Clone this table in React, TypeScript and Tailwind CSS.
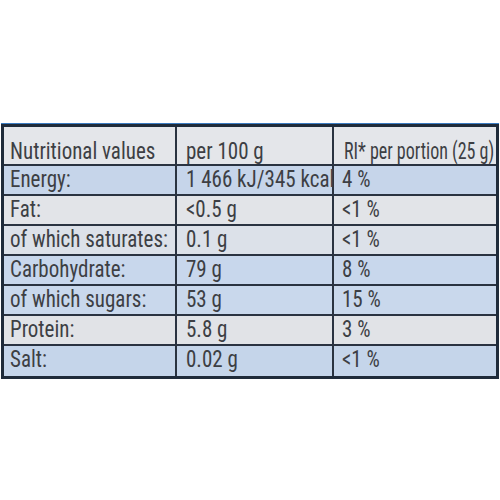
const rows = [
  { name: "Energy:", per100: "1 466 kJ/345 kcal", ri: "4 %", bg: "bg-[#c6d5ea]" },
  { name: "Fat:", per100: "<0.5 g", ri: "<1 %", bg: "bg-[#e2e4e8]" },
  { name: "of which saturates:", per100: "0.1 g", ri: "<1 %", bg: "bg-[#dce1e9]" },
  { name: "Carbohydrate:", per100: "79 g", ri: "8 %", bg: "bg-[#c8d7ec]" },
  { name: "of which sugars:", per100: "53 g", ri: "15 %", bg: "bg-[#c9d8ec]" },
  { name: "Protein:", per100: "5.8 g", ri: "3 %", bg: "bg-[#e1e3e7]" },
  { name: "Salt:", per100: "0.02 g", ri: "<1 %", bg: "bg-[#c5d5ea]" },
];

const line = "border-[#2a3341]";

// printed label face is taller than Roboto Condensed: stretch glyphs a little
function T({ children }: { children: string }) {
  return <span className="inline-block origin-[50%_77%] scale-y-[1.17]">{children}</span>;
}

export default function App() {
  return (
    <div
      className="w-[500px] h-[500px] bg-white pt-[124px] text-[#3d3f44] text-[21px] leading-[28px] whitespace-nowrap"
      style={{ fontFamily: '"Roboto Condensed", "Liberation Sans", sans-serif' }}
    >
      <div className="mx-[1px] border-[3px] border-[#1f2b3a] shadow-[0_-1px_0_#3b7cc2]">
        <div className={`grid grid-cols-[173px_157px_1fr] h-[39px] bg-[#e4e6ea] border-b-2 ${line} leading-[26px]`}>
          <div className={`border-r-2 ${line} pl-[6px] pt-[12px]`}><T>Nutritional values</T></div>
          <div className={`border-r-2 ${line} pl-[9px] pt-[12px]`}><T>per 100 g</T></div>
          <div className="pl-[10px] pt-[13px] text-[18px]">
            <span className="inline-block origin-[50%_74%] scale-y-[1.33]">RI* per portion (25 g)</span>
          </div>
        </div>
        {rows.map((r, i) => (
          <div
            key={r.name}
            className={`grid grid-cols-[173px_157px_1fr] h-[30px] ${r.bg} ${i < rows.length - 1 ? `border-b-2 ${line}` : ""}`}
          >
            <div className={`border-r-2 ${line} pl-[6px]`}><T>{r.name}</T></div>
            <div className={`border-r-2 ${line} pl-[9px]`}><T>{r.per100}</T></div>
            <div className="pl-[8px]"><T>{r.ri}</T></div>
          </div>
        ))}
      </div>
    </div>
  );
}
